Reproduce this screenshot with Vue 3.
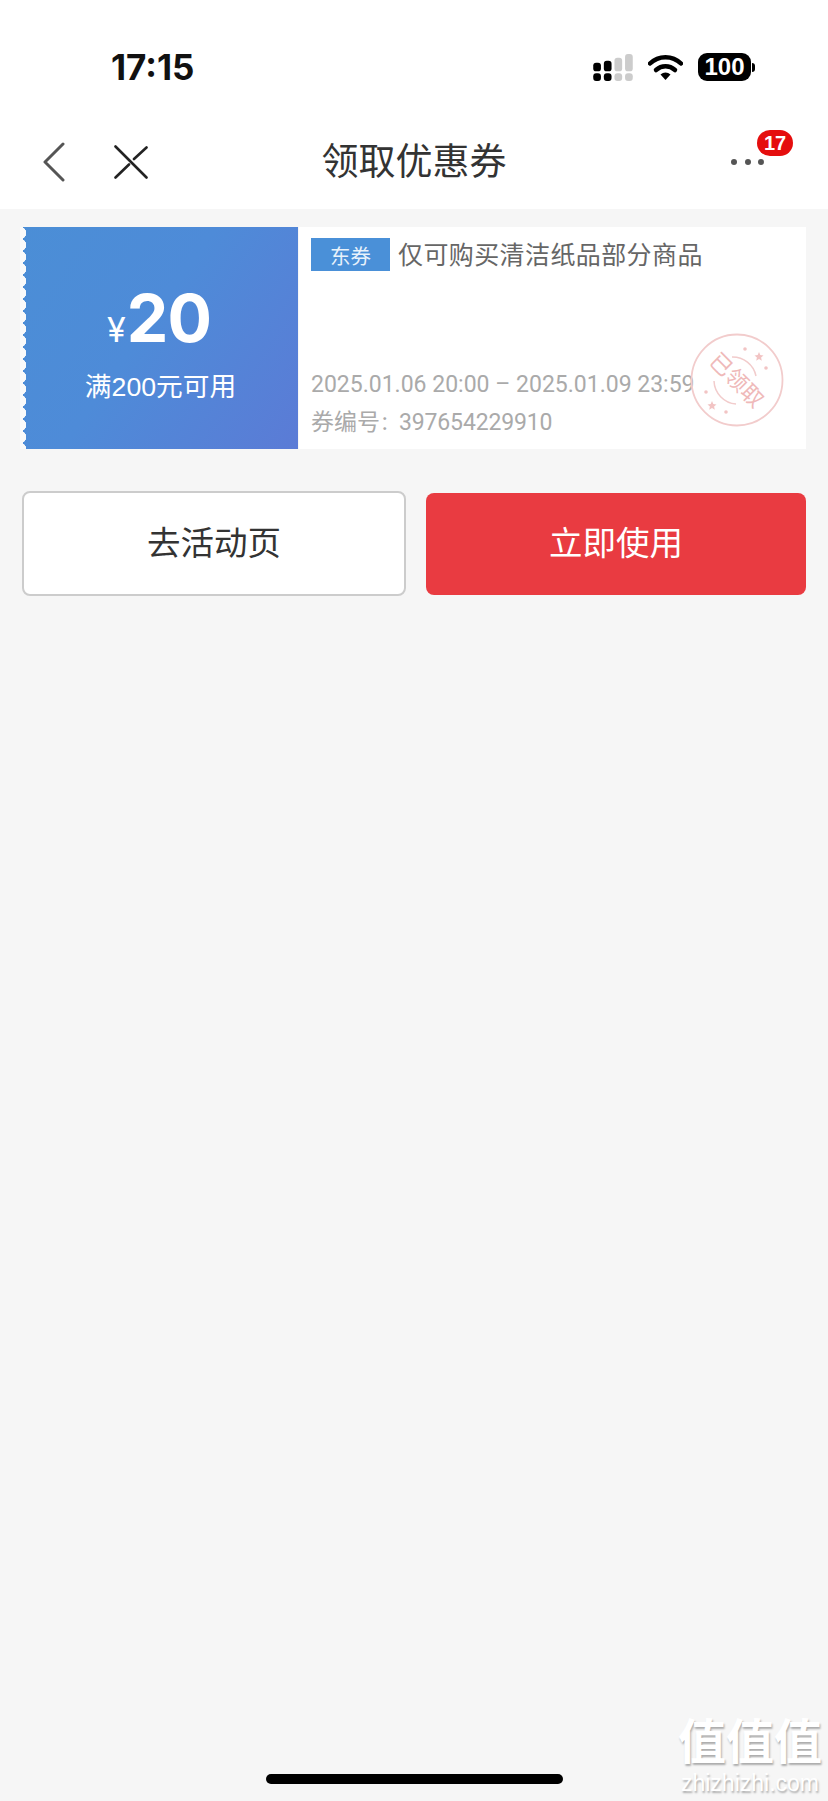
<template>
  <div class="page">
    <!-- status bar -->
    <div class="status-bar">
      <span class="time">17:15</span>
      <div class="status-icons">
        <svg class="signal" width="40" height="27" viewBox="0 0 41 28">
          <rect x="0" y="9" width="8" height="9" rx="3" fill="#000" />
          <rect x="0" y="20" width="8" height="8" rx="3" fill="#000" />
          <rect x="11" y="7" width="8" height="11" rx="3" fill="#000" />
          <rect x="11" y="20" width="8" height="8" rx="3" fill="#000" />
          <rect x="22" y="4" width="8" height="14" rx="3" fill="#ccc" />
          <rect x="22" y="20" width="8" height="8" rx="3" fill="#ccc" />
          <rect x="33" y="0" width="8" height="18" rx="3" fill="#ccc" />
          <rect x="33" y="20" width="8" height="8" rx="3" fill="#ccc" />
        </svg>
        <svg class="wifi" width="35" height="27" viewBox="0 0 35 27">
          <path d="M2 9.500C10.500 1 24.500 1 33 9.500" fill="none" stroke="#000" stroke-width="4.500" stroke-linecap="round" />
          <path d="M8 16C13.500 11 21.500 11 27 16" fill="none" stroke="#000" stroke-width="4.500" stroke-linecap="round" />
          <path d="M12.500 20.500C15.500 17.800 19.500 17.800 22.500 20.500L17.500 26Z" fill="#000" />
        </svg>
        <div class="battery">
          <span class="battery-body">100</span>
          <span class="battery-tip"></span>
        </div>
      </div>
    </div>

    <!-- nav bar -->
    <div class="nav">
      <div class="nav-left">
        <svg width="24" height="40" viewBox="0 0 24 40">
          <path d="M21 2L3 20L21 38" fill="none" stroke="#555" stroke-width="3" stroke-linecap="round" stroke-linejoin="round" />
        </svg>
        <svg width="34" height="34" viewBox="0 0 34 34">
          <path d="M1.500 1.500L32.500 32.500M1.500 32.500L15 19.500M20 14L32.500 2.500" fill="none" stroke="#222" stroke-width="2.600" stroke-linecap="round" />
        </svg>
      </div>
      <h1 class="nav-title">领取优惠券</h1>
      <div class="nav-more">
        <i></i><i></i><i></i>
        <span class="badge">17</span>
      </div>
    </div>

    <!-- coupon -->
    <div class="coupon">
      <div class="coupon-left">
        <div class="amount"><span class="yen">¥</span>20</div>
        <div class="limit">满200元可用</div>
      </div>
      <div class="coupon-right">
        <div class="coupon-title">
          <span class="tag">东券</span>
          <span class="title-text">仅可购买清洁纸品部分商品</span>
        </div>
        <div class="coupon-meta">
          <div>2025.01.06 20:00 – 2025.01.09 23:59</div>
          <div>券编号<span class="colon">：</span><span class="code">397654229910</span></div>
        </div>
        <svg class="stamp" width="96" height="96" viewBox="0 0 96 96">
          <circle cx="48" cy="48" r="45.500" fill="none" stroke="#f2cccc" stroke-width="1.800" />
          <path d="M43 25A24 24 0 0 1 67 44" fill="none" stroke="#f2cccc" stroke-width="1.500" />
          <path d="M25 49A24 24 0 0 0 47 72" fill="none" stroke="#f2cccc" stroke-width="1.500" />
          <circle cx="56" cy="17" r="1.800" fill="#f2c4c4" />
          <polygon points="70,20 71.300,23 74.500,23.400 72.100,25.500 72.800,28.700 70,27 67.200,28.700 67.900,25.500 65.500,23.400 68.700,23" fill="#f2c4c4" />
          <circle cx="77" cy="36" r="1.800" fill="#f2c4c4" />
          <circle cx="17" cy="60" r="1.800" fill="#f2c4c4" />
          <polygon points="23,69 24.300,72 27.500,72.400 25.100,74.500 25.800,77.700 23,76 20.200,77.700 20.900,74.500 18.500,72.400 21.700,72" fill="#f2c4c4" />
          <circle cx="37" cy="80" r="1.800" fill="#f2c4c4" />
          <text x="48" y="56" transform="rotate(45 48 48)" text-anchor="middle" class="stamp-text">已领取</text>
        </svg>
      </div>
    </div>

    <!-- actions -->
    <div class="actions">
      <button class="btn btn-outline">去活动页</button>
      <button class="btn btn-primary">立即使用</button>
    </div>

    <div class="home-bar"></div>

    <div class="watermark">
      <div class="wm-cn">值值值</div>
      <div class="wm-en">zhizhizhi.com</div>
    </div>
  </div>
</template>

<script setup>
</script>

<style>
html,
body {
  margin: 0;
  background: #f6f6f6;
}
</style>

<style scoped>
.page {
  position: relative;
  width: 828px;
  height: 1801px;
  overflow: hidden;
  background: #f6f6f6;
  font-family: "Liberation Sans", "Noto Sans CJK SC", sans-serif;
  color: #333;
}

.status-bar {
  height: 100px;
  box-sizing: border-box;
  padding: 47px 73px 0 111px;
  display: flex;
  justify-content: space-between;
  align-items: flex-start;
  background: #fff;
}

.time {
  font-size: 35px;
  line-height: 40px;
  font-weight: 700;
  font-family: Inter, "Liberation Sans", sans-serif;
  color: #111;
}

.status-icons {
  display: flex;
  align-items: center;
  gap: 15px;
  margin-top: 6px;
}

.battery {
  display: flex;
  align-items: center;
}

.battery-body {
  width: 53px;
  height: 28px;
  border-radius: 9px;
  background: #000;
  color: #fff;
  font-size: 24px;
  line-height: 28px;
  font-weight: 700;
  text-align: center;
}

.battery-tip {
  width: 3px;
  height: 9px;
  margin-left: 1px;
  background: #000;
  border-radius: 0 3px 3px 0;
}

.nav {
  height: 109px;
  box-sizing: border-box;
  padding: 14px 0 0 42px;
  display: flex;
  align-items: center;
  position: relative;
  background: #fff;
}

.nav-left {
  display: flex;
  align-items: center;
  gap: 48px;
}

.nav-title {
  position: absolute;
  left: 0;
  right: 0;
  top: 40px;
  margin: 0;
  text-align: center;
  font-size: 37px;
  line-height: 46px;
  font-weight: 400;
  color: #333;
}

.nav-more {
  position: absolute;
  left: 731px;
  top: 59px;
  display: flex;
  gap: 7.500px;
}

.nav-more i {
  width: 6px;
  height: 6px;
  border-radius: 50%;
  background: #555;
}

.badge {
  position: absolute;
  left: 26px;
  top: -29px;
  width: 36px;
  height: 26px;
  border-radius: 13px;
  background: #e50e0e;
  color: #fff;
  font-size: 20px;
  line-height: 26px;
  font-weight: 700;
  text-align: center;
}

.coupon {
  margin: 18px 22px 0 23px;
  height: 222px;
  display: flex;
}

.coupon-left {
  position: relative;
  width: 275px;
  flex-shrink: 0;
  box-sizing: border-box;
  padding-top: 57px;
  background: linear-gradient(125deg, #4b8ed6 0%, #4e8bd8 45%, #5b7bd6 100%);
  color: #fff;
  text-align: center;
}

.coupon-left::before {
  content: "";
  position: absolute;
  left: -3px;
  top: 0;
  bottom: 0;
  width: 9px;
  background: radial-gradient(circle at 0 6px, #fafafa 6px, transparent 6.500px) 0 0 / 9px 12px repeat-y;
}

.amount {
  font-size: 66px;
  line-height: 68px;
  font-weight: 700;
  letter-spacing: -1px;
  padding-right: 3px;
  font-family: Inter, "Liberation Sans", sans-serif;
}

.yen {
  font-size: 34px;
  font-weight: 400;
  letter-spacing: 0;
  margin-right: 1px;
}

.limit {
  margin-top: 6px;
  font-size: 26.700px;
  line-height: 34px;
}

.coupon-right {
  position: relative;
  flex: 1;
  margin-left: 1px;
  box-sizing: border-box;
  padding: 11px 0 0 12px;
  display: flex;
  flex-direction: column;
  justify-content: space-between;
  background: #fff;
}

.coupon-title {
  display: flex;
  align-items: flex-start;
  gap: 8px;
  font-size: 25px;
  line-height: 30px;
  letter-spacing: 0.400px;
  color: #666;
}

.title-text {
  margin-top: 2px;
}

.tag {
  width: 79px;
  height: 33px;
  overflow: hidden;
  background: #4a90d8;
  color: #e8f2fb;
  font-size: 20.500px;
  line-height: 37px;
  text-align: center;
  letter-spacing: 0;
}

.coupon-meta {
  padding-bottom: 6px;
  font-size: 23px;
  line-height: 38px;
  color: #aaa;
  font-family: Roboto, "Noto Sans CJK SC", sans-serif;
}

.colon {
  font-size: 19px;
}

.code {
  letter-spacing: -0.150px;
}

.stamp {
  position: absolute;
  left: 390px;
  top: 105px;
}

.stamp-text {
  font-size: 22px;
  fill: #efb9b9;
  font-family: "Noto Sans CJK SC", sans-serif;
}

.actions {
  margin-top: 42px;
  padding: 0 22px;
  display: flex;
  gap: 20px;
  align-items: center;
}

.btn {
  font-family: "Noto Sans CJK SC", sans-serif;
  font-size: 33.500px;
  border-radius: 8px;
  padding: 0 0 6px;
}

.btn-outline {
  width: 384px;
  height: 105px;
  border: 2px solid #ccc;
  background: #fff;
  color: #333;
}

.btn-primary {
  width: 380px;
  height: 102px;
  border: none;
  background: #e93b41;
  color: #fff;
}

.home-bar {
  position: absolute;
  left: 266px;
  top: 1774px;
  width: 297px;
  height: 10px;
  border-radius: 5px;
  background: #000;
}

.watermark {
  position: absolute;
  left: 676px;
  top: 1709px;
  width: 148px;
  text-align: center;
  color: #fff;
  text-shadow: 1px 2px 2px rgba(0, 0, 0, 0.3);
}

.wm-cn {
  font-size: 48px;
  line-height: 58px;
  font-weight: 700;
  font-family: "Noto Sans CJK SC", sans-serif;
}

.wm-en {
  margin-top: 2px;
  font-size: 23px;
  line-height: 28px;
  font-family: "Liberation Sans", sans-serif;
}
</style>
